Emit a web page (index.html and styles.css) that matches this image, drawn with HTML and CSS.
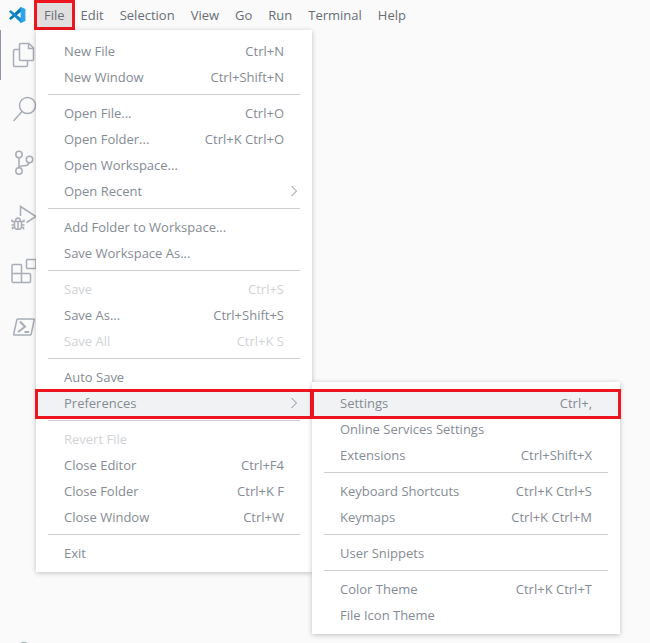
FILE: index.html
```html
<!DOCTYPE html>
<html lang="en">
<head>
<meta charset="utf-8">
<title>Visual Studio Code</title>
<link rel="stylesheet" href="styles.css">
</head>
<body>
<header class="titlebar">
  <svg class="logo" viewBox="0 0 18 18" aria-hidden="true">
    <path fill="#0877b9" d="M13 1 1 12.3 2.6 14 13 5.8z"/>
    <path fill="#168bd0" d="M13 17 1 5.7 2.6 4 13 12.2z"/>
    <path fill="#2ba5ec" d="M12.6.7 17.4 3v12l-4.8 2.3z"/>
  </svg>
  <nav class="menubar">
    <div class="entry">
      <button class="top marked" type="button">File</button>
      <ul class="menu">
        <li><button type="button">New File<kbd>Ctrl+N</kbd></button></li>
        <li><button type="button">New Window<kbd>Ctrl+Shift+N</kbd></button></li>
        <li class="sep"></li>
        <li><button type="button">Open File...<kbd>Ctrl+O</kbd></button></li>
        <li><button type="button">Open Folder...<kbd>Ctrl+K Ctrl+O</kbd></button></li>
        <li><button type="button">Open Workspace...</button></li>
        <li><button type="button">Open Recent<svg class="chevron" viewBox="0 0 8 12"><path d="M1.500 1 6.500 6l-5 5"/></svg></button></li>
        <li class="sep"></li>
        <li><button type="button">Add Folder to Workspace...</button></li>
        <li><button type="button">Save Workspace As...</button></li>
        <li class="sep"></li>
        <li><button type="button" disabled>Save<kbd>Ctrl+S</kbd></button></li>
        <li><button type="button">Save As...<kbd>Ctrl+Shift+S</kbd></button></li>
        <li><button type="button" disabled>Save All<kbd>Ctrl+K S</kbd></button></li>
        <li class="sep"></li>
        <li><button type="button">Auto Save</button></li>
        <li class="parent">
          <button class="marked" type="button">Preferences<svg class="chevron" viewBox="0 0 8 12"><path d="M1.500 1 6.500 6l-5 5"/></svg></button>
          <ul class="menu submenu">
            <li><button class="marked" type="button">Settings<kbd>Ctrl+,</kbd></button></li>
            <li><button type="button">Online Services Settings</button></li>
            <li><button type="button">Extensions<kbd>Ctrl+Shift+X</kbd></button></li>
            <li class="sep"></li>
            <li><button type="button">Keyboard Shortcuts<kbd>Ctrl+K Ctrl+S</kbd></button></li>
            <li><button type="button">Keymaps<kbd>Ctrl+K Ctrl+M</kbd></button></li>
            <li class="sep"></li>
            <li><button type="button">User Snippets</button></li>
            <li class="sep"></li>
            <li><button type="button">Color Theme<kbd>Ctrl+K Ctrl+T</kbd></button></li>
            <li><button type="button">File Icon Theme</button></li>
          </ul>
        </li>
        <li class="sep"></li>
        <li><button type="button" disabled>Revert File</button></li>
        <li><button type="button">Close Editor<kbd>Ctrl+F4</kbd></button></li>
        <li><button type="button">Close Folder<kbd>Ctrl+K F</kbd></button></li>
        <li><button type="button">Close Window<kbd>Ctrl+W</kbd></button></li>
        <li class="sep"></li>
        <li><button type="button">Exit</button></li>
      </ul>
    </div>
    <button class="top" type="button">Edit</button>
    <button class="top" type="button">Selection</button>
    <button class="top" type="button">View</button>
    <button class="top" type="button">Go</button>
    <button class="top" type="button">Run</button>
    <button class="top" type="button">Terminal</button>
    <button class="top" type="button">Help</button>
  </nav>
</header>
<aside class="activity">
  <button class="tool active" type="button" aria-label="Explorer"><svg viewBox="0 0 26 26"><path d="M9.500 1.500H18L22.500 6v11.500q0 1-1 1h-12q-1 0-1-1v-15q0-1 1-1M17.500 1.500V6.500h5M8.500 7.500H4q-1.500 0-1.500 1.500v14q0 1.500 1.500 1.500h11q1.500 0 1.500-1.500v-4"/></svg></button>
  <button class="tool" type="button" aria-label="Search"><svg viewBox="0 0 26 26"><circle cx="16.500" cy="9.500" r="8"/><path d="M11 15.500 2.500 25"/></svg></button>
  <button class="tool" type="button" aria-label="Source Control"><svg viewBox="0 0 26 26"><circle cx="8" cy="4.500" r="3.200"/><circle cx="8" cy="21" r="3.200"/><circle cx="18.500" cy="9.500" r="3.200"/><path d="M8 7.700v10.100M18 12.700q-1 3-4 3h-2q-3 0-4 2.200"/></svg></button>
  <button class="tool" type="button" aria-label="Run and Debug"><svg viewBox="0 0 26 26"><path d="M9.500 12V2.500L25 12.500l-9.500 6"/><path d="M3.500 17.500h7v4.500q0 3.500-3.500 3.500t-3.500-3.500zM4.500 17.500q0-3.500 2.500-3.500t2.500 3.500M7 17.500v8M3.500 21H.5M10.500 21h3M3.500 17.500H1V15.500M10.500 17.500H13V15.500M4 23.500H1.500v2M10 23.500h2.500v2"/></svg></button>
  <button class="tool" type="button" aria-label="Extensions"><svg viewBox="0 0 26 26"><path d="M2 6.500h7.500q1 0 1 1v8h8q1 0 1 1v7q0 1-1 1H2q-1 0-1-1v-16q0-1 1-1zM1 15.500h9.500v9"/><rect x="15.500" y="1.500" width="9.500" height="9" rx="1"/></svg></button>
  <button class="tool" type="button" aria-label="PowerShell"><svg viewBox="0 0 26 26"><path d="M7 7h15.500q1 0 .7 1l-3 14q-.2 1-1.200 1H3.500q-1 0-.8-1l3.100-14q.2-1 1.200-1z"/><path class="bold" d="m9 9.500 5 5.200L7 20M13.500 20h4.500"/></svg></button>
  <button class="tool account" type="button" aria-label="Accounts"><svg viewBox="0 0 26 26"><circle cx="13" cy="7" r="5.500"/><path d="M3 25q0-10 10-10t10 10"/></svg></button>
</aside>
</body>
</html>
```
FILE: styles.css
```css
* {
  box-sizing: border-box;
}

body {
  display: flex;
  flex-direction: column;
  height: 100vh;
  margin: 0;
  background: #fafafa;
  color: #858b94;
  font: 13px/26px "Open Sans", "Noto Sans", sans-serif;
}

button {
  border: 0;
  background: none;
  color: inherit;
  font: inherit;
}

.titlebar {
  display: flex;
  flex: none;
  align-items: center;
  height: 30px;
  padding-left: 8px;
}

.logo {
  width: 18px;
  height: 18px;
  margin-right: 10px;
}

.menubar {
  display: flex;
  color: #686e76;
}

.entry {
  position: relative;
}

.top {
  height: 26px;
  padding: 0 8px;
}

.marked {
  outline: 3px solid #ed1620;
  outline-offset: -2px;
}

.top.marked {
  background: #dfdfdf;
  outline-offset: -1px;
}

.menu {
  position: absolute;
  top: 28px;
  left: 0;
  z-index: 1;
  width: 276px;
  margin: 0;
  padding: 8px 0 6px;
  background: #fff;
  box-shadow: 0 1px 5px #0000003d;
  color: #858b94;
  list-style: none;
}

.menu button {
  display: flex;
  align-items: center;
  justify-content: space-between;
  width: 100%;
  height: 26px;
  padding: 0 28px;
}

.menu button:disabled {
  color: #d0d3d6;
}

.menu .marked {
  height: 28px;
  margin-bottom: -2px;
  padding-bottom: 2px;
  background: #f1f2f4;
}

.menu kbd {
  font: inherit;
}

.sep {
  height: 1px;
  margin: 4px 12px 5px;
  background: #cbcdcf;
}

.chevron {
  width: 8px;
  height: 12px;
  margin-right: -14px;
  fill: none;
  stroke: #858b94;
}

.parent {
  position: relative;
}

.submenu {
  top: -8px;
  left: 100%;
  z-index: 2;
  width: 308px;
}

.activity {
  display: flex;
  flex: 1;
  flex-direction: column;
  gap: 4px;
  width: 48px;
  min-height: 0;
  overflow: hidden;
}

.tool {
  display: flex;
  flex: none;
  align-items: center;
  justify-content: center;
  height: 50px;
  padding: 0;
}

.tool svg {
  width: 26px;
  height: 26px;
  fill: none;
  stroke: #a8adb7;
  stroke-width: 1.5;
}

.tool .bold {
  stroke-width: 2;
}

.active {
  box-shadow: inset 1px 0 #9096a8;
}

.account {
  margin-top: auto;
  margin-bottom: -36px;
}
```
